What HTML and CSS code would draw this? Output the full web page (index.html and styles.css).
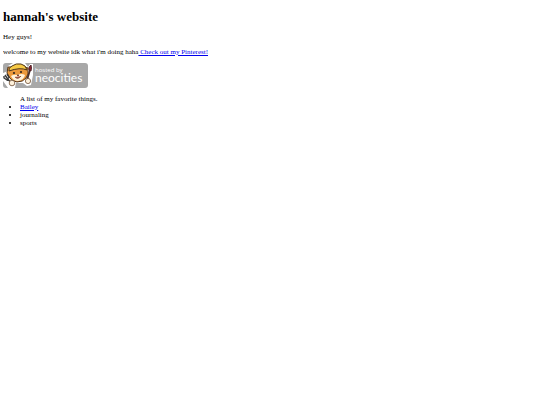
FILE: index.html
```html
<!DOCTYPE html>
<html lang="en">
<head>
    <meta charset="UTF-8">
    <meta name="viewport" content="width=device-width, initial-scale=1.0">
    <title>hannah's website</title>
    <link rel="stylesheet" href="styles.css">
</head>
<body>
    <h1>hannah's website</h1>
    <p>Hey guys!</p>
    <p>welcome to my website idk what i'm doing haha<a href="#"> Check out my Pinterest!</a></p>

    <a class="badge" href="#" aria-label="hosted by neocities">
        <svg viewBox="0 0 85 25" width="85" height="25">
            <rect x="0" y="0" width="85" height="25" rx="3" fill="#a8a8a8"/>
            <!-- cat with a fork and a brush -->
            <path d="M0 10 L5 8 L5 3 L10 0 H22 L25 4 L27 1 H30 V12 L28 22 L24 23 L20 20 L13 20 L12 25 H5 L0 18 Z" fill="#fff"/>
            <path d="M5 4 L8 4 L22 4 L25 5 L25 11 L23 15 Q20 19 14 19 Q8 18 6 14 L4 10 Z" fill="#ec9a3c" stroke="#50351d" stroke-width="1"/>
            <path d="M6 8 Q5 5 9 3 Q13 0 18 1 Q23 2 24 7 Q17 4 6 8 Z" fill="#f6c945" stroke="#4a351c" stroke-width="1"/>
            <path d="M8 13 Q11 11 14 12 Q19 10 22 12 Q21 17 15 18 Q10 18 8 13 Z" fill="#fff2d9"/>
            <circle cx="11" cy="10" r="1.1" fill="#2d251f"/>
            <circle cx="18" cy="9" r="1.1" fill="#2d251f"/>
            <path d="M14 12 L16 12 L15 13 Z M12 14 Q15 17 18 13" fill="#b55c4a" stroke="#704030" stroke-width=".8"/>
            <path d="M9 21 L4 15 M1 13 L1 15 L4 17 L6 14 L4 11 M2 12 L4 15" fill="none" stroke="#383838" stroke-width="1.4"/>
            <path d="M24 17 L27 7" stroke="#4a3029" stroke-width="1.8"/>
            <path d="M26 7 Q25 4 28 2 Q29 5 28 8 Z" fill="#8e2434" stroke="#482024" stroke-width=".9"/>
            <circle cx="9" cy="20" r="2.8" fill="#fff2dc" stroke="#705036" stroke-width=".8"/>
            <circle cx="25" cy="18" r="2.6" fill="#fff2dc" stroke="#705036" stroke-width=".8"/>
            <text class="badge-small" x="32" y="9">hosted by</text>
            <text class="badge-name" x="32" y="19">neocities</text>
        </svg>
    </a>

    <ul>
        A list of my favorite things.
        <li><a href="#">Bailey</a></li>
        <li>journaling</li>
        <li>sports</li>
    </ul>
</body>
</html>
```
FILE: styles.css
```css
body {
    margin: 9px 3px;
    background-color: #fff;
    color: #000;
    font-family: "Liberation Serif", "Times New Roman", serif;
    font-size: 7px;
    line-height: 8px;
}
h1 {
    margin: 0 0 9px;
    font-size: 13px;
    line-height: 15px;
}
p {
    margin: 0 0 7px;
}
a {
    color: #0000ee;
}
.badge {
    display: block;
    width: fit-content;
}
.badge svg {
    display: block;
}
.badge text {
    fill: #fff;
}
.badge-small {
    font-family: "Open Sans", sans-serif;
    font-size: 6px;
}
.badge-name {
    font-family: Lato, sans-serif;
    font-size: 12px;
}
ul {
    margin: 7px 0;
    padding-left: 17px;
}
```
